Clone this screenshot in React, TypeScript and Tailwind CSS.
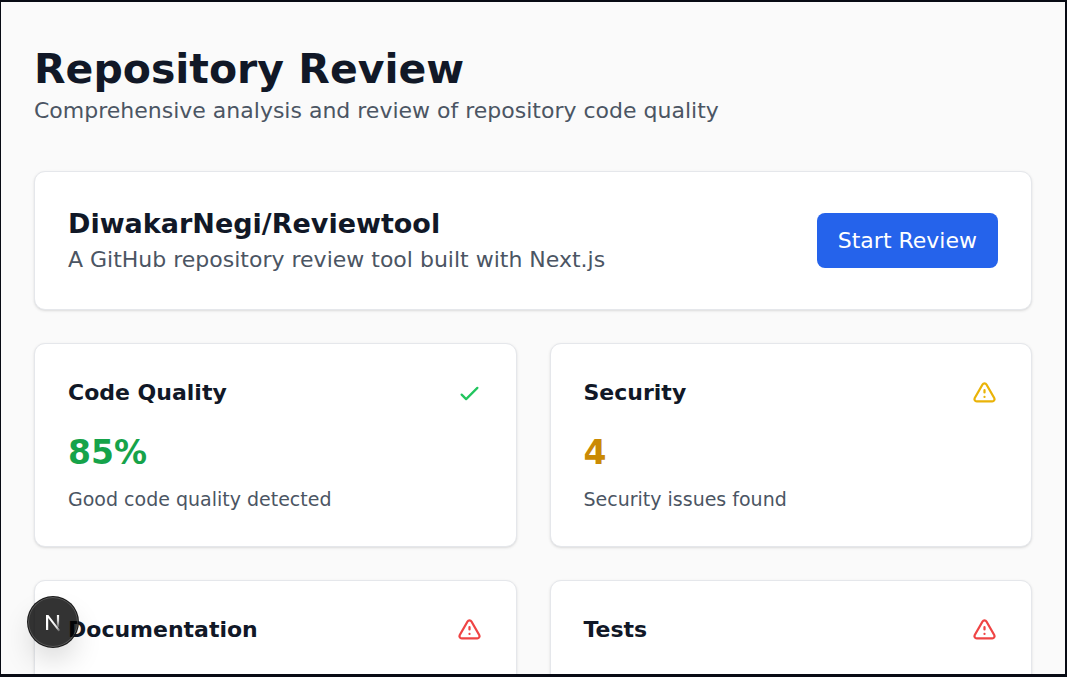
type Status = "good" | "warning" | "error";

type Metric = {
  title: string;
  status: Status;
  value?: string;
  note?: string;
};

const metrics: Metric[] = [
  { title: "Code Quality", status: "good", value: "85%", note: "Good code quality detected" },
  { title: "Security", status: "warning", value: "4", note: "Security issues found" },
  { title: "Documentation", status: "error" },
  { title: "Tests", status: "error" },
];

const iconColor = {
  good: "text-[#22c55e]",
  warning: "text-[#eab308]",
  error: "text-[#ef4444]",
};

const valueColor = {
  good: "text-[#16a34a]",
  warning: "text-[#ca8a04]",
  error: "text-[#dc2626]",
};

const checkPath = "M5 13l4 4L19 7";
const warningPath =
  "M12 9v2m0 4h.01m-6.938 4h13.856c1.54 0 2.502-1.667 1.732-3L13.732 4c-.77-1.333-2.694-1.333-3.464 0L3.34 16c-.77 1.333.192 3 1.732 3z";

const panel = "rounded-[11px] border border-[#e5e7eb] bg-white p-[33px] shadow-sm";

function StatusIcon({ status }: { status: Status }) {
  return (
    <svg
      className={`size-[27px] ${iconColor[status]}`}
      viewBox="0 0 24 24"
      fill="none"
      stroke="currentColor"
      strokeWidth="2"
      strokeLinecap="round"
      strokeLinejoin="round"
      aria-hidden="true"
    >
      <path d={status === "good" ? checkPath : warningPath} />
    </svg>
  );
}

function MetricCard({ title, status, value, note }: Metric) {
  return (
    <section className={`${panel} min-h-[203px]`}>
      <div className="mb-[22px] flex items-center justify-between">
        <h3 className="text-[22px] leading-[32px] font-semibold text-[#111827]">{title}</h3>
        <StatusIcon status={status} />
      </div>
      {value && (
        <p className={`mb-[11px] text-[33px] leading-[44px] font-bold ${valueColor[status]}`}>{value}</p>
      )}
      {note && <p className="text-[19px] leading-[27px] text-[#4b5563]">{note}</p>}
    </section>
  );
}

function DevToolsBadge() {
  return (
    <button
      type="button"
      aria-label="Open Next.js Dev Tools"
      className="absolute bottom-[26px] left-[26px] flex size-[52px] items-center justify-center rounded-full border border-[#171717]/90 bg-black/80 shadow-[inset_0_0_0_1px_rgba(255,255,255,0.18),0_16px_32px_-8px_rgba(0,0,0,0.24)]"
    >
      <svg width="20" height="20" viewBox="0 0 20 20" fill="none" aria-hidden="true">
        <defs>
          <linearGradient id="diagonal" x1="9" y1="10" x2="17" y2="20" gradientUnits="userSpaceOnUse">
            <stop stopColor="white" />
            <stop offset="0.6" stopColor="white" stopOpacity="0.8" />
            <stop offset="1" stopColor="white" stopOpacity="0" />
          </linearGradient>
          <linearGradient id="stem" x1="15" y1="3" x2="15" y2="17" gradientUnits="userSpaceOnUse">
            <stop stopColor="white" />
            <stop offset="0.4" stopColor="white" stopOpacity="0.8" />
            <stop offset="1" stopColor="white" stopOpacity="0" />
          </linearGradient>
        </defs>
        <path d="M3 18V3H5.4L17.2 18.2L15.6 19.4L5.2 6V18Z" fill="url(#diagonal)" />
        <path d="M15 3V15" stroke="url(#stem)" strokeWidth="2.2" />
      </svg>
    </button>
  );
}

export default function App() {
  return (
    <div className="relative h-screen overflow-hidden border-t-2 border-r-2 border-b-3 border-l border-[#080b14] bg-[#fafafa] font-['DejaVu_Sans',sans-serif]">
      <main className="h-full overflow-y-auto px-[33px] py-[43px] [scrollbar-width:none]">
        <header className="mb-[44px]">
          <h1 className="text-[41px] leading-[49px] font-bold text-[#111827]">Repository Review</h1>
          <p className="text-[22px] leading-[33px] text-[#4b5563]">
            Comprehensive analysis and review of repository code quality
          </p>
        </header>

        <section className={`${panel} mb-[33px] flex items-center justify-between gap-6`}>
          <div>
            <h2 className="text-[27px] leading-[38px] font-semibold text-[#111827]">DiwakarNegi/Reviewtool</h2>
            <p className="text-[22px] leading-[33px] text-[#4b5563]">A GitHub repository review tool built with Next.js</p>
          </div>
          <button
            type="button"
            className="shrink-0 rounded-lg bg-[#2563eb] px-[21px] py-[11px] text-[22px] leading-[33px] text-white"
          >
            Start Review
          </button>
        </section>

        <div className="grid grid-cols-2 gap-[33px]">
          {metrics.map((metric) => (
            <MetricCard key={metric.title} {...metric} />
          ))}
        </div>
      </main>
      <DevToolsBadge />
    </div>
  );
}
